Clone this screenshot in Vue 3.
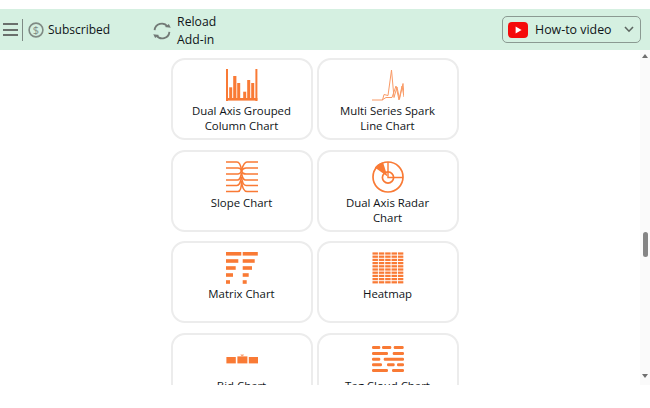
<script setup>
const matrixRows = [
  [0, 15.3, 16.7, 31.8, 0],
  [0, 12.3, 16.7, 28.7, 7.2],
  [0, 9.7, 16.7, 26, 14.2],
  [0, 7, 16.7, 22.7, 21.2],
  [0, 4, 16.7, 20.7, 28.2],
]
const matrixRects = matrixRows.flatMap(([a, b, c, d, y]) => [
  { x: a, y, w: b - a },
  { x: c, y, w: d - c },
])
const heatRects = []
for (let r = 0; r < 10; r++) {
  for (let c = 0; c < 5; c++) {
    heatRects.push({ x: c * 6.55, y: r * 3.3 + 0.4 })
  }
}
const tagRects = [
  [0, 8.3, 2], [10, 19.3, 2], [21.7, 31.7, 2],
  [0, 16, 8], [20.7, 32, 8],
  [0, 8.3, 13.7], [11.7, 32, 13.7],
  [0, 10, 19.3], [15, 22.7, 19.3], [25, 32, 19.3],
  [0, 16, 25], [20, 32, 25],
]
</script>

<template>
  <div class="page">
    <header class="bar">
      <button class="menu" aria-label="Menu">
        <span></span><span></span><span></span>
      </button>
      <i class="divider"></i>
      <svg class="dollar" width="16" height="16" viewBox="0 0 16 16">
        <circle cx="8" cy="8" r="6.9" fill="none" stroke="#7f8a84" stroke-width="1.6" />
        <text x="8" y="11.8" text-anchor="middle" class="dollar-sign">$</text>
      </svg>
      <span class="subscribed">Subscribed</span>
      <svg class="reload" width="20" height="18" viewBox="0 0 20 18">
        <path d="M2.6 8.2A7.2 7.2 0 0 1 15.6 4.6" fill="none" stroke="#727a76" stroke-width="1.8" />
        <path d="M13 5.4h6l-2.4-3.6z" fill="#727a76" transform="rotate(8 16 4)" />
        <path d="M17.4 9.8A7.2 7.2 0 0 1 4.4 13.4" fill="none" stroke="#727a76" stroke-width="1.8" />
        <path d="M7 12.6H1l2.4 3.6z" fill="#727a76" transform="rotate(8 4 14)" />
      </svg>
      <span class="reload-text">Reload<br />Add-in</span>
      <button class="video">
        <svg width="20" height="16" viewBox="0 0 20 16">
          <rect width="20" height="16" rx="4" fill="#f50a0a" />
          <path d="M7.6 4.4v7.2l6-3.6z" fill="#fff" />
        </svg>
        <span class="video-label">How-to video</span>
        <svg class="chevron" width="10" height="7" viewBox="0 0 10 7">
          <path d="M1 1l4 4.2L9 1" fill="none" stroke="#5d6661" stroke-width="1.6" />
        </svg>
      </button>
    </header>

    <div class="body">
      <main class="list">
        <div class="grid">
          <article class="card">
            <svg class="icon" viewBox="0 0 32 32">
              <g fill="#f97a35">
                <rect x="0" y="0" width="2" height="32" />
                <rect x="29.4" y="0" width="2" height="32" />
                <rect x="0" y="29" width="31.4" height="2.6" />
                <rect x="3.2" y="18.3" width="3" height="10.7" />
                <rect x="7.2" y="7" width="3.2" height="22" />
                <rect x="11.2" y="14" width="3" height="15" />
                <rect x="17.2" y="22.7" width="3" height="6.3" />
                <rect x="21.2" y="11" width="3" height="18" />
                <rect x="25.2" y="14" width="3" height="15" />
              </g>
            </svg>
            <p>Dual Axis Grouped<br />Column Chart</p>
          </article>
          <article class="card">
            <svg class="icon" viewBox="0 0 32 32">
              <g fill="none" stroke="#f99a66" stroke-width="1">
                <path d="M0 31H10.5L12 25.5 16 26.5 19.5 1 22 28.5 25 18 27.5 30 31 14.5 32 26" />
                <path d="M10 31 14 28.5H20L24 17 27 31 30 17 32 28" />
              </g>
            </svg>
            <p>Multi Series Spark<br />Line Chart</p>
          </article>
          <article class="card">
            <svg class="icon" viewBox="0 0 32 32">
              <g fill="none" stroke="#f97a35" stroke-width="1.6">
                <path d="M0 1H11C14 1 15 6 15.5 9" />
                <path d="M0 7H12C14 7 15 8 15.5 10" />
                <path d="M0 13H12C14 13 15 11 15.5 10" />
                <path d="M0 19H11.5C14 19 15 15 15.5 12" />
                <path d="M0 24.5H11C14 24.5 15 19 15.5 16" />
                <path d="M0 30.5H12C15 30.5 15.5 25 15.5 20" />
                <path d="M32 1H21C18 1 16.5 6 15.5 9" />
                <path d="M32 7H20C17.5 7 16 9 15.5 10" />
                <path d="M32 13H20C17.5 13 16 12 15.5 10" />
                <path d="M32 19H19.5C17 19 16 15 15.5 12" />
                <path d="M32 24.5H20C17 24.5 16 20 15.5 16" />
                <path d="M32 30.5H21C17.5 30.5 16 25 15.5 20" />
              </g>
            </svg>
            <p>Slope Chart</p>
          </article>
          <article class="card">
            <svg class="icon" viewBox="0 0 32 32">
              <path d="M15.5 15.5 2.8 6.6A15 15 0 0 1 11 1.2z" fill="#f97a35" />
              <circle cx="16" cy="16" r="15" fill="none" stroke="#f97a35" stroke-width="1.7" />
              <circle cx="16" cy="16.5" r="5.6" fill="none" stroke="#f97a35" stroke-width="1.7" />
              <path d="M16 1v15.5H31" fill="none" stroke="#f97a35" stroke-width="1.4" />
            </svg>
            <p>Dual Axis Radar<br />Chart</p>
          </article>
          <article class="card">
            <svg class="icon" viewBox="0 0 32 32">
              <rect v-for="(r, i) in matrixRects" :key="i" :x="r.x" :y="r.y" :width="r.w" height="3.6" fill="#f97a35" />
            </svg>
            <p>Matrix Chart</p>
          </article>
          <article class="card">
            <svg class="icon" viewBox="0 0 32 33">
              <rect v-for="(r, i) in heatRects" :key="i" :x="r.x" :y="r.y" width="5.6" height="2.3" fill="#f97a35" />
            </svg>
            <p>Heatmap</p>
          </article>
          <article class="card">
            <svg class="icon" viewBox="0 0 32 32">
              <g fill="#f97a35">
                <rect x="0.4" y="13" width="9.4" height="6.4" />
                <rect x="11.4" y="12.4" width="10" height="7" />
                <rect x="22.8" y="13" width="9.2" height="6.4" />
                <path d="M14.2 10.6h4l-2 2.4z" fill="#f9a477" />
              </g>
            </svg>
            <p>Bid Chart</p>
          </article>
          <article class="card">
            <svg class="icon" viewBox="0 0 32 32">
              <rect v-for="(r, i) in tagRects" :key="i" :x="r[0]" :y="r[2]" :width="r[1] - r[0]" height="3" rx="1.2" fill="#f97a35" />
            </svg>
            <p>Tag Cloud Chart</p>
          </article>
        </div>
      </main>
      <aside class="scrollbar">
        <i class="arrow up"></i>
        <div class="track"><i class="thumb"></i></div>
        <i class="arrow down"></i>
      </aside>
    </div>
  </div>
</template>

<style>
html, body { margin: 0; background: #fff; }
</style>

<style scoped>
.page {
  width: 650px;
  height: 408px;
  overflow: hidden;
  background: #fff;
  font-family: "Open Sans", "Noto Sans", sans-serif;
  color: #0f1418;
  padding-top: 9px;
  box-sizing: border-box;
}
.bar {
  height: 41px;
  background: #d5f0e1;
  display: flex;
  align-items: center;
  padding: 0 9px 0 3px;
  font-size: 12.4px;
}
.menu {
  width: 15px;
  height: 13px;
  padding: 0;
  border: 0;
  background: none;
  display: flex;
  flex-direction: column;
  justify-content: space-between;
}
.menu span { height: 2px; background: #6a6f6c; }
.divider { width: 1px; height: 22px; background: #7e8a84; margin-left: 4px; }
.dollar { margin-left: 5px; }
.dollar-sign { font-size: 11px; fill: #7f8a84; }
.subscribed { margin-left: 4px; font-size: 12px; }
.reload { margin-left: 42px; margin-top: 3px; }
.reload-text { margin-left: 5px; margin-top: 3px; line-height: 18px; font-size: 12.2px; }
.video {
  margin-left: auto;
  width: 139px;
  height: 27px;
  box-sizing: border-box;
  border: 1.5px solid #8b9a92;
  border-radius: 5px;
  background: none;
  padding: 0 6px 0 5px;
  display: flex;
  align-items: center;
  font: inherit;
  color: inherit;
}
.video-label { margin-left: 7px; }
.chevron { margin-left: auto; }
.body {
  height: 335px;
  display: flex;
}
.list {
  flex: 1;
  overflow: hidden;
  padding-top: 8px;
  display: flex;
  justify-content: center;
  padding-right: 11px;
}
.grid {
  display: grid;
  grid-template-columns: 142px 142px;
  grid-auto-rows: 82px;
  column-gap: 4px;
  row-gap: 9.5px;
  height: max-content;
}
.card {
  box-sizing: border-box;
  border: 2px solid #ececec;
  border-radius: 14px;
  padding-top: 9px;
  display: flex;
  flex-direction: column;
  align-items: center;
}
.icon { width: 32px; height: 32px; display: block; flex: none; }
.card p {
  margin: 2px 0 0;
  font-size: 11.4px;
  line-height: 15px;
  text-align: center;
}
.scrollbar {
  width: 10px;
  background: #fafafa;
  display: flex;
  flex-direction: column;
  align-items: center;
  padding: 4px 0;
  box-sizing: border-box;
}
.track { flex: 1; width: 100%; padding-top: 174px; box-sizing: border-box; display: flex; justify-content: center; }
.thumb { width: 5px; height: 25px; border-radius: 3px; background: #858585; }
.arrow { width: 0; height: 0; border-left: 3.5px solid transparent; border-right: 3.5px solid transparent; }
.arrow.up { border-bottom: 4px solid #6f6f6f; }
.arrow.down { border-top: 4px solid #6f6f6f; margin-bottom: 3px; }
</style>
